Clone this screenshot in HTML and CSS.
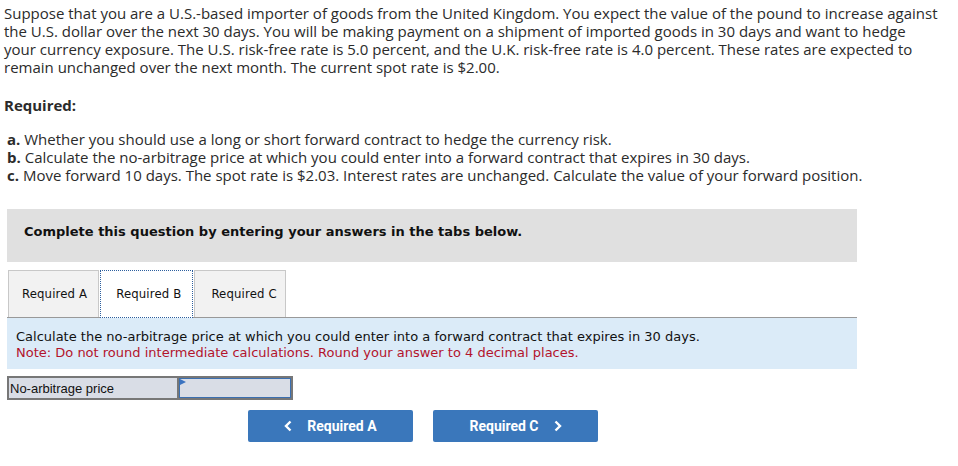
FILE: index.html
```html
<!DOCTYPE html>
<html>
<head>
<meta charset="utf-8">
<link rel="stylesheet" href="styles.css">
</head>
<body>
<div class="page">
  <p class="intro">Suppose that you are a U.S.-based importer of goods from the United Kingdom. You expect the value of the pound to increase against the U.S. dollar over the next 30 days. You will be making payment on a shipment of imported goods in 30 days and want to hedge your currency exposure. The U.S. risk-free rate is 5.0 percent, and the U.K. risk-free rate is 4.0 percent. These rates are expected to remain unchanged over the next month. The current spot rate is $2.00.</p>
  <p class="req-head">Required:</p>
  <ul class="req-list">
    <li><b>a.</b> Whether you should use a long or short forward contract to hedge the currency risk.</li>
    <li><b>b.</b> Calculate the no-arbitrage price at which you could enter into a forward contract that expires in 30 days.</li>
    <li><b>c.</b> Move forward 10 days. The spot rate is $2.03. Interest rates are unchanged. Calculate the value of your forward position.</li>
  </ul>
  <div class="panel">
    <div class="banner">Complete this question by entering your answers in the tabs below.</div>
    <div class="tabs">
      <div class="tab">Required A</div>
      <div class="tab active">Required B</div>
      <div class="tab last">Required C</div>
    </div>
    <div class="instructions">
      <div>Calculate the no-arbitrage price at which you could enter into a forward contract that expires in 30 days.</div>
      <div class="note">Note: Do not round intermediate calculations. Round your answer to 4 decimal places.</div>
    </div>
    <div class="answer-row">
      <div class="label-cell">No-arbitrage price</div>
      <div class="input-cell"><span class="marker"></span></div>
    </div>
    <div class="nav">
      <button class="nav-btn"><svg class="chev" width="8" height="12" viewBox="0 0 8 12"><path d="M6.5 1.5 L2 6 L6.5 10.5" fill="none" stroke="#fff" stroke-width="2.4"/></svg>Required A</button>
      <button class="nav-btn">Required C<svg class="chev right" width="8" height="12" viewBox="0 0 8 12"><path d="M1.5 1.5 L6 6 L1.5 10.5" fill="none" stroke="#fff" stroke-width="2.4"/></svg></button>
    </div>
  </div>
</div>
</body>
</html>
```
FILE: styles.css
```css
html, body {
  margin: 0;
  padding: 0;
  background: #fff;
}
.page {
  padding: 4px 0 0 4px;
  width: 946px;
  font-family: "Open Sans", "Lato", sans-serif;
  color: #2b2b2b;
}
.intro {
  margin: 0;
  width: 935px;
  font-size: 15px;
  line-height: 18px;
}
.req-head {
  margin: 20px 0 0 0;
  font-size: 15px;
  font-weight: bold;
  line-height: 18px;
}
.req-list {
  list-style: none;
  margin: 16px 0 0 3px;
  padding: 0;
  font-size: 15px;
  line-height: 18px;
}
.req-list b { font-weight: bold; }
.panel {
  margin: 25px 0 0 3px;
  width: 850px;
}
.banner {
  background: #e0e0e0;
  height: 53px;
  box-sizing: border-box;
  padding: 15px 0 0 17px;
  font-family: "DejaVu Sans", Verdana, sans-serif;
  font-weight: bold;
  font-size: 13px;
  line-height: 16px;
  color: #111;
}
.tabs {
  display: flex;
  margin-top: 8px;
  padding-left: 1px;
  border-bottom: 1px solid #999;
}
.tab {
  height: 47px;
  box-sizing: border-box;
  padding: 0 11px 2px 13px;
  display: flex;
  align-items: center;
  background: #f2f2f2;
  border: 1px solid #c8c8c8;
  border-bottom: none;
  font-family: "DejaVu Sans Condensed", "DejaVu Sans", sans-serif;
  font-size: 13px;
  letter-spacing: 0.15px;
  color: #111;
}
.tab.active {
  background: #fff;
  border: 1px dotted #2d5f9e;
  height: 48px;
  margin: 0 1px -1px 1px;
  padding: 0 11px 2px 15px;
}
.tab.last {
  padding: 0 8px 2px 16px;
}
.instructions {
  background: #dbebf8;
  padding: 11px 9px 8px;
  font-family: "DejaVu Sans", sans-serif;
  font-size: 13px;
  line-height: 16px;
  color: #111;
}
.note { color: #b3142c; }
.answer-row {
  display: flex;
  margin-top: 7px;
  height: 24px;
}
.label-cell {
  width: 170px;
  box-sizing: border-box;
  background: #d9dde6;
  border: 2px solid #777;
  border-right: none;
  font-family: "Liberation Sans", Arial, sans-serif;
  font-size: 13px;
  padding-left: 1px;
  display: flex;
  align-items: center;
  color: #111;
}
.input-cell {
  width: 116px;
  box-sizing: border-box;
  background: #d9dde6;
  border: 2px solid #777;
  box-shadow: inset 0 0 0 1px #3b6fb0;
  position: relative;
}
.marker {
  position: absolute;
  left: 1px;
  top: 1px;
  width: 0;
  height: 0;
  border-top: 3px solid transparent;
  border-bottom: 3px solid transparent;
  border-left: 6px solid #3b73c0;
}
.nav {
  display: flex;
  gap: 20px;
  margin-top: 10px;
  padding-left: 241px;
}
.nav-btn {
  width: 165px;
  height: 32px;
  border: none;
  border-radius: 2px;
  background: #3a77bb;
  color: #fff;
  font-family: "Roboto", sans-serif;
  font-weight: bold;
  font-size: 14px;
  display: flex;
  align-items: center;
  justify-content: center;
  gap: 15px;
  padding: 0;
}
.chev { display: block; }
```
